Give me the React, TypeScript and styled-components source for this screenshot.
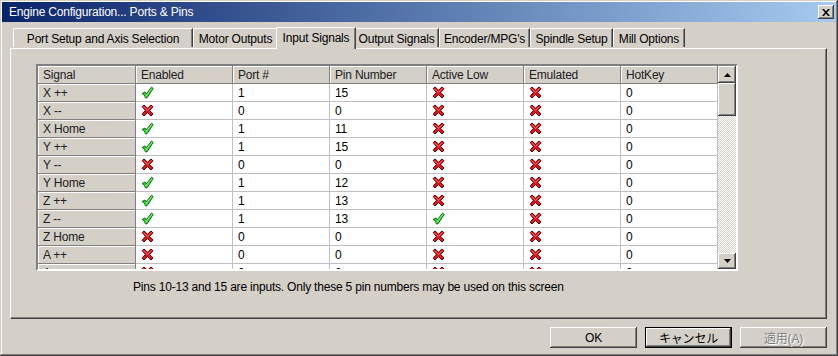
import styled, { createGlobalStyle, css } from 'styled-components';

const GlobalStyle = createGlobalStyle`
	html, body { margin: 0; padding: 0; background: #d4d0c8; }
	body { font-family: "Liberation Sans", Arial, "Noto Sans CJK JP", sans-serif; font-size: 12px; letter-spacing: -0.2px; color: #000; }
`;

type Mark = 'on' | 'off';
type Row = [string, Mark, string, string, Mark, Mark, string];

const rows: Row[] = [
	['X ++', 'on', '1', '15', 'off', 'off', '0'],
	['X --', 'off', '0', '0', 'off', 'off', '0'],
	['X Home', 'on', '1', '11', 'off', 'off', '0'],
	['Y ++', 'on', '1', '15', 'off', 'off', '0'],
	['Y --', 'off', '0', '0', 'off', 'off', '0'],
	['Y Home', 'on', '1', '12', 'off', 'off', '0'],
	['Z ++', 'on', '1', '13', 'off', 'off', '0'],
	['Z --', 'on', '1', '13', 'on', 'off', '0'],
	['Z Home', 'off', '0', '0', 'off', 'off', '0'],
	['A ++', 'off', '0', '0', 'off', 'off', '0'],
	['A --', 'off', '0', '0', 'off', 'off', '0'],
];

const headers = ['Signal', 'Enabled', 'Port #', 'Pin Number', 'Active Low', 'Emulated', 'HotKey'];

const tabs = [
	{ label: 'Port Setup and Axis Selection', width: 180 },
	{ label: 'Motor Outputs', width: 85 },
	{ label: 'Input Signals', width: 80, active: true },
	{ label: 'Output Signals', width: 85 },
	{ label: "Encoder/MPG's", width: 91 },
	{ label: 'Spindle Setup', width: 83 },
	{ label: 'Mill Options', width: 72 },
];

const raised = css`
	box-shadow: inset -1px -1px #404040, inset 1px 1px #ffffff, inset -2px -2px #808080, inset 2px 2px #d4d0c8;
`;

const Window = styled.div`
	width: 838px;
	height: 356px;
	box-sizing: border-box;
	padding: 2px;
	background: #d4d0c8;
	box-shadow: inset -1px -1px #404040, inset 1px 1px #d4d0c8, inset -2px -2px #808080, inset 2px 2px #ffffff;
	display: flex;
	flex-direction: column;
`;

const TitleBar = styled.div`
	height: 20px;
	display: flex;
	align-items: center;
	justify-content: space-between;
	padding: 0 2px 0 7px;
	background: linear-gradient(to right, #0a246a, #a6caf0);
	color: #fff;
	font-size: 12px;
`;

const CloseButton = styled.div`
	width: 16px;
	height: 14px;
	background: #d4d0c8;
	display: flex;
	align-items: center;
	justify-content: center;
	${raised}
`;

const Body = styled.div`
	padding: 4px 9px 0 8px;
	display: flex;
	flex-direction: column;
`;

const TabStrip = styled.div`
	display: flex;
	align-items: flex-end;
	height: 22px;
	padding-left: 3px;
`;

const Tab = styled.div<{ $w: number; $active?: boolean }>`
	position: relative;
	box-sizing: border-box;
	width: ${(p) => p.$w}px;
	height: 19px;
	margin-bottom: 1px;
	padding-top: 2px;
	background: #d4d0c8;
	border-top: 1px solid #fff;
	border-left: 1px solid #fff;
	border-right: 1px solid #404040;
	border-top-left-radius: 2px;
	box-shadow: inset -1px 0 #808080;
	display: flex;
	align-items: center;
	justify-content: center;
	white-space: nowrap;
	${(p) =>
		p.$active &&
		css`
			z-index: 1;
			height: 22px;
			margin: 0 -2px -1px -2px;
			padding-top: 0;
			padding-bottom: 1px;
		`}
`;

const Panel = styled.div`
	height: 271px;
	box-sizing: border-box;
	border-top: 1px solid #fff;
	border-left: 1px solid #fff;
	border-right: 1px solid #404040;
	border-bottom: 1px solid #404040;
	box-shadow: inset -1px -1px #808080;
	padding: 15px 0 0 25px;
`;

const GridFrame = styled.div`
	width: 698px;
	height: 203px;
	border: 2px solid;
	border-color: #808080 #ffffff #ffffff #808080;
	box-shadow: inset 1px 1px #404040;
	display: flex;
	background: #fff;
`;

const Table = styled.div`
	width: 680px;
	height: 203px;
	overflow: hidden;
	display: grid;
	grid-template-columns: 98px repeat(6, 97px);
	grid-auto-rows: 18px;
`;

const Cell = styled.div<{ $head?: boolean }>`
	box-sizing: border-box;
	display: flex;
	align-items: center;
	padding-left: 5px;
	white-space: nowrap;
	border-right: 1px solid #c0c0c0;
	border-bottom: 1px solid #c0c0c0;
	${(p) =>
		p.$head &&
		css`
			background: #d4d0c8;
			border-right-color: #808080;
			border-bottom-color: #808080;
			box-shadow: inset 1px 1px #ffffff;
			color: #202020;
		`}
`;

const ScrollBar = styled.div`
	width: 18px;
	display: flex;
	flex-direction: column;
	background-color: #eae8e4;
	background-image: repeating-conic-gradient(#d4d0c8 0 25%, #ffffff 0 50%);
	background-size: 2px 2px;
`;

const ScrollButton = styled.div<{ $h: number }>`
	height: ${(p) => p.$h}px;
	background: #d4d0c8;
	display: flex;
	align-items: center;
	justify-content: center;
	${raised}
`;

const Spacer = styled.div`
	flex: 1;
`;

const Note = styled.div`
	margin: 9px 0 0 97px;
	height: 14px;
	line-height: 14px;
`;

const ButtonRow = styled.div`
	display: flex;
	justify-content: flex-end;
	gap: 8px;
	padding: 8px 0 0 0;
`;

const Button = styled.div<{ $default?: boolean; $disabled?: boolean }>`
	width: 87px;
	height: 21px;
	box-sizing: border-box;
	display: flex;
	align-items: center;
	justify-content: center;
	font-family: "Liberation Sans", "Noto Sans CJK JP", sans-serif;
	${raised}
	${(p) =>
		p.$default &&
		css`
			border: 1px solid #000;
			box-shadow: inset -1px -1px #404040, inset 1px 1px #ffffff, inset -2px -2px #808080;
		`}
	${(p) =>
		p.$disabled &&
		css`
			color: #808080;
			text-shadow: 1px 1px #ffffff;
		`}
`;

const Check = () => (
	<svg width="13" height="13" viewBox="0 0 13 13">
		<path d="M1 7.5 L4 6 L5.2 8 L10.5 1.2 L12.2 2.4 L6 11.8 L4.3 11.8 L3.5 9 Z" fill="#33dd33" stroke="#0b6a0b" strokeWidth="1" strokeLinejoin="round" />
		<path d="M4.3 10.5 L10.8 2.5" stroke="#9ff59f" strokeWidth="0.8" />
	</svg>
);

const Cross = () => (
	<svg width="13" height="13" viewBox="0 0 13 13">
		<path d="M1.2 2.6 L3 1 L6.5 4.2 L10 1 L12 2.8 L8.6 6.4 L12 10 L10 12 L6.5 8.6 L3 12 L1.2 10.2 L4.4 6.4 Z" fill="#e3141c" stroke="#5a0000" strokeWidth="1" strokeLinejoin="round" />
		<path d="M2.5 2.8 L6.5 6.4 L10.5 2.4" stroke="#ff8a8a" strokeWidth="0.8" fill="none" />
	</svg>
);

const Arrow = ({ up }: { up?: boolean }) => (
	<svg width="7" height="4" viewBox="0 0 7 4">
		<path d={up ? 'M3.5 0 L7 4 L0 4 Z' : 'M0 0 L7 0 L3.5 4 Z'} fill="#000" />
	</svg>
);

const renderMark = (m: Mark) => (m === 'on' ? <Check /> : <Cross />);

export default function App() {
	return (
		<>
			<GlobalStyle />
			<Window>
				<TitleBar>
					<span>Engine Configuration... Ports &amp; Pins</span>
					<CloseButton>
						<svg width="8" height="7" viewBox="0 0 8 7">
							<path d="M0 0 L2 0 L4 2.5 L6 0 L8 0 L5 3.5 L8 7 L6 7 L4 4.5 L2 7 L0 7 L3 3.5 Z" fill="#000" />
						</svg>
					</CloseButton>
				</TitleBar>
				<Body>
					<TabStrip>
						{tabs.map((t) => (
							<Tab key={t.label} $w={t.width} $active={t.active}>
								{t.label}
							</Tab>
						))}
					</TabStrip>
					<Panel>
						<GridFrame>
							<Table>
								{headers.map((h) => (
									<Cell key={h} $head>
										{h}
									</Cell>
								))}
								{rows.map((r) => [
									<Cell key={r[0]} $head>{r[0]}</Cell>,
									<Cell key={r[0] + 'e'}>{renderMark(r[1])}</Cell>,
									<Cell key={r[0] + 'p'}>{r[2]}</Cell>,
									<Cell key={r[0] + 'n'}>{r[3]}</Cell>,
									<Cell key={r[0] + 'a'}>{renderMark(r[4])}</Cell>,
									<Cell key={r[0] + 'm'}>{renderMark(r[5])}</Cell>,
									<Cell key={r[0] + 'h'}>{r[6]}</Cell>,
								])}
							</Table>
							<ScrollBar>
								<ScrollButton $h={17}>
									<Arrow up />
								</ScrollButton>
								<ScrollButton $h={33} />
								<Spacer />
								<ScrollButton $h={16}>
									<Arrow />
								</ScrollButton>
							</ScrollBar>
						</GridFrame>
						<Note>Pins 10-13 and 15 are inputs. Only these 5 pin numbers may be used on this screen</Note>
					</Panel>
					<ButtonRow>
						<Button>OK</Button>
						<Button $default>キャンセル</Button>
						<Button $disabled>適用(A)</Button>
					</ButtonRow>
				</Body>
			</Window>
		</>
	);
}
